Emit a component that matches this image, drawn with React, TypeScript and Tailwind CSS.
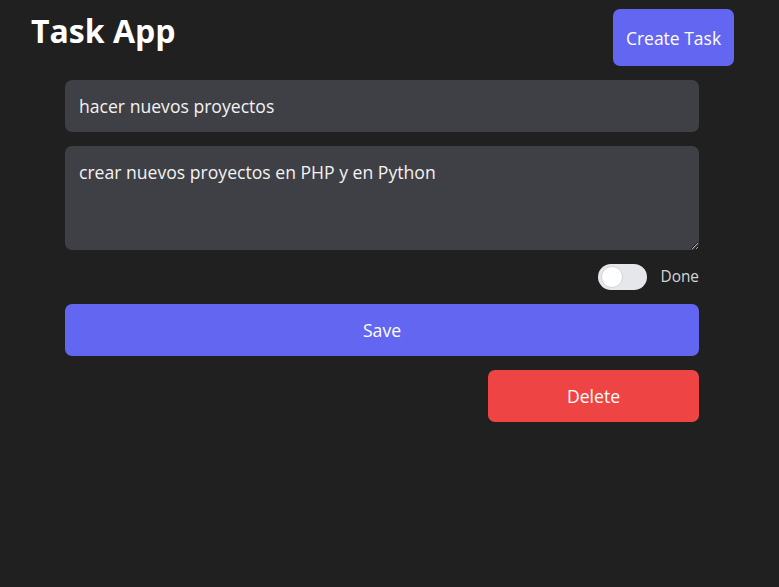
export default function App() {
  return (
    <div className="min-h-screen bg-[#202020] font-['Open_Sans',sans-serif] text-white">
      {/* Header */}
      <header className="flex items-start justify-between pl-[31px] pr-[45px]">
        <h1 className="mt-[11px] text-[32px] font-bold leading-[40px]">Task App</h1>
        <button className="mt-[9px] flex h-[57px] w-[121px] items-center justify-center rounded-[7px] bg-[#6366f1] pt-[2px] text-[17.5px] text-white">
          Create Task
        </button>
      </header>

      {/* Form */}
      <form className="ml-[65px] mt-[14px] flex w-[634px] flex-col">
        <input
          type="text"
          defaultValue="hacer nuevos proyectos"
          className="h-[52px] w-full rounded-[7px] bg-[#3f3f46] px-[14px] text-[17.6px] text-[#f3f3f3] outline-none"
        />
        <textarea
          defaultValue="crear nuevos proyectos en PHP y en Python"
          className="mt-[14px] h-[104px] w-full rounded-[7px] bg-[#3f3f46] px-[14px] pt-[13px] text-[17.6px] leading-[1.5] text-[#f3f3f3] outline-none"
        />
        <div className="mt-[14px] flex h-[26px] items-center justify-end gap-[13px]">
          <span className="flex h-[26px] w-[49px] items-center rounded-full bg-[#e5e7eb] px-[3px]">
            <span className="h-[22px] w-[22px] rounded-full border border-[#d1d5db] bg-white" />
          </span>
          <span className="-mt-[1px] text-[15.4px] text-[#d4d4d8]">Done</span>
        </div>
        <button
          type="button"
          className="mt-[14px] h-[52px] w-full rounded-[7px] bg-[#6366f1] text-[17.6px] text-white"
        >
          Save
        </button>
        <button
          type="button"
          className="mt-[14px] h-[52px] w-[211px] self-end rounded-[7px] bg-[#ef4444] text-[17.6px] text-white"
        >
          Delete
        </button>
      </form>
    </div>
  );
}
